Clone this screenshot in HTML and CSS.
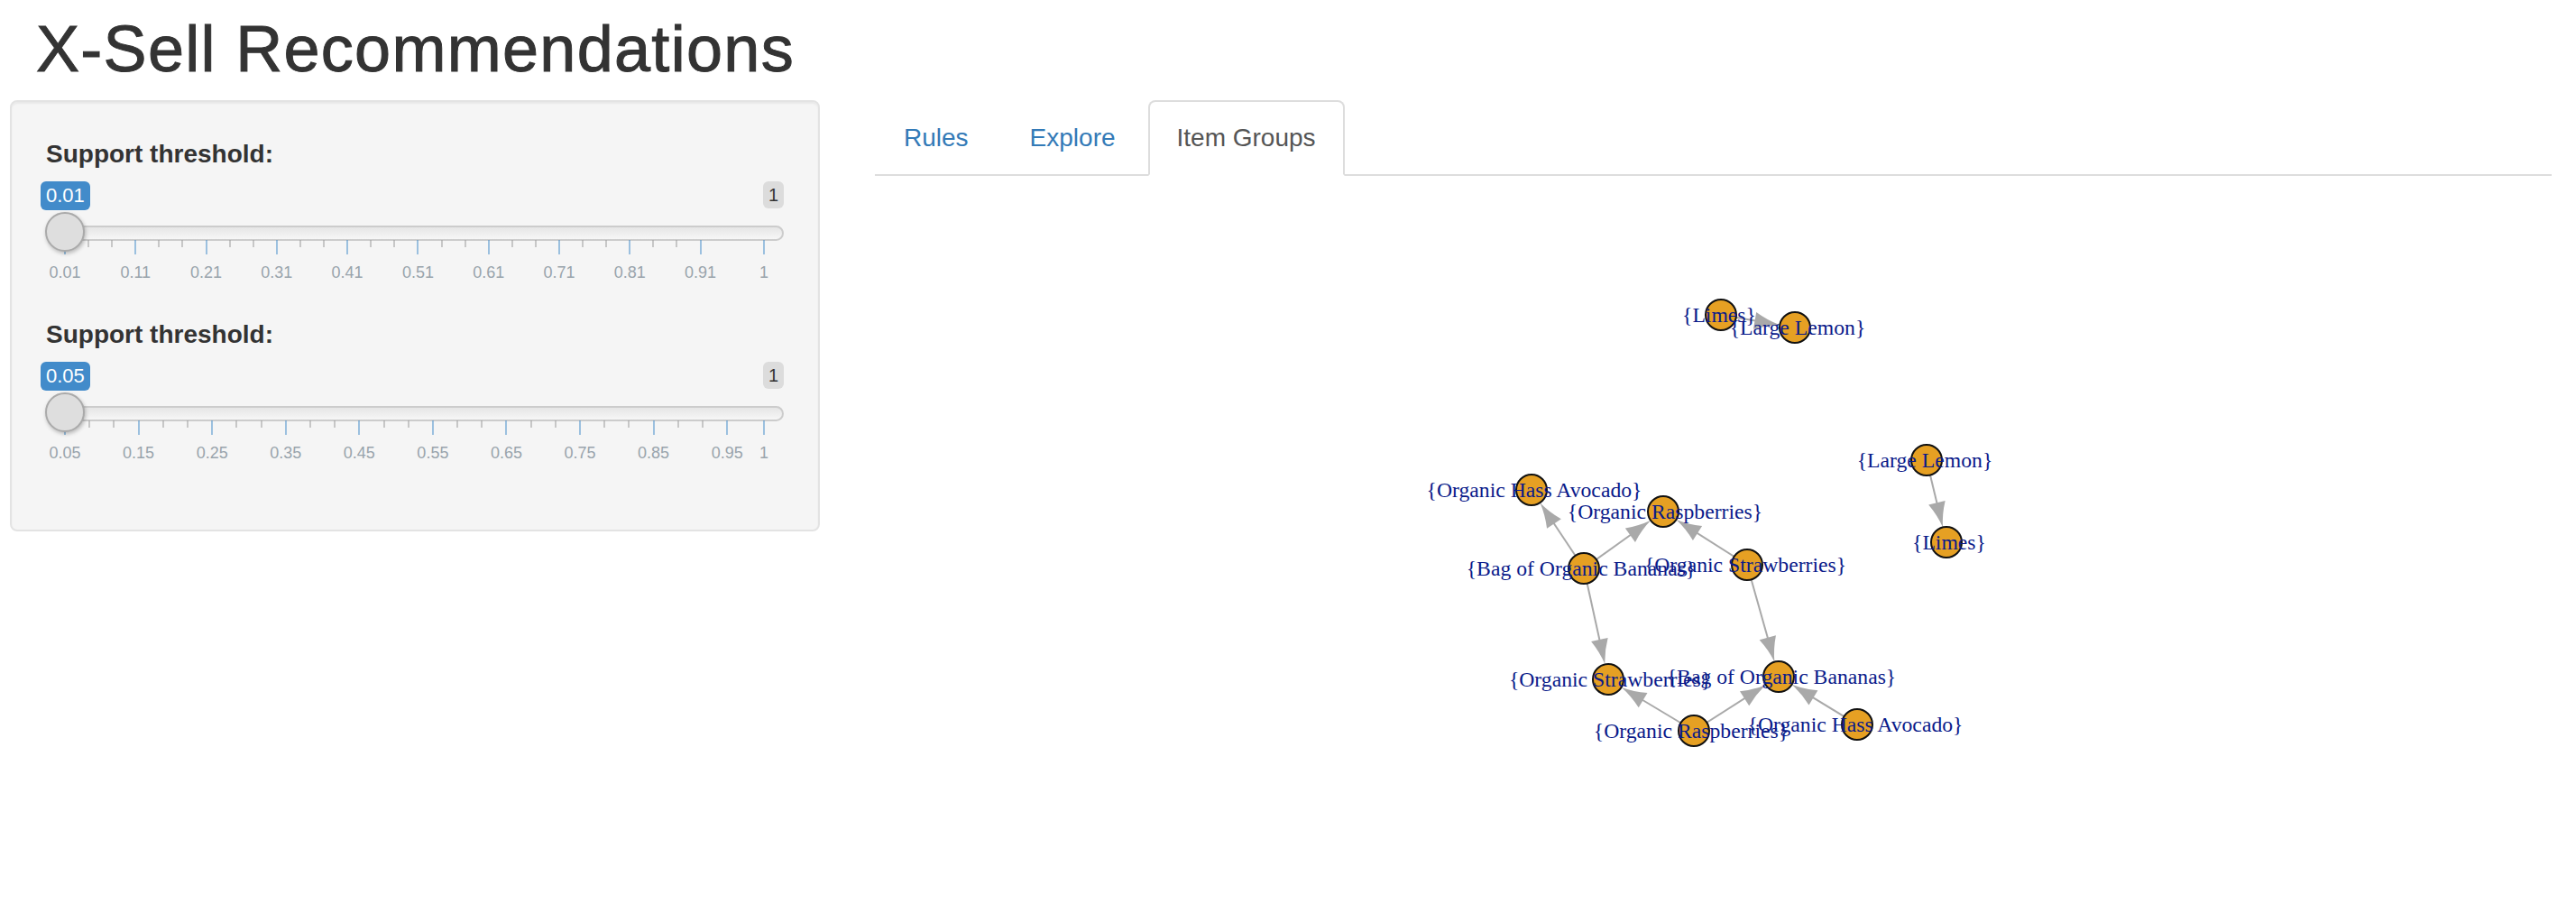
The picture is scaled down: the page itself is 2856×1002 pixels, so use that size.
FILE: index.html
```html
<!DOCTYPE html>
<html>
<head>
<meta charset="utf-8">
<title>X-Sell Recommendations</title>
<link rel="stylesheet" href="styles.css">
</head>
<body>
<div class="container">
  <h1 class="title">X-Sell Recommendations</h1>
  <div class="row">
    <aside class="sidebar">
      <div class="well">
        <div class="form-group">
          <label class="control-label">Support threshold:</label>
          <div class="irs">
            <span class="irs-line"></span>
            <span class="irs-max">1</span>
            <span class="irs-single">0.01</span>
            <div class="irs-grid">
              <span class="pol" style="left:0%"></span>
              <span class="pol small" style="left:3.367%"></span>
              <span class="pol small" style="left:6.734%"></span>
              <span class="pol" style="left:10.101%"></span>
              <span class="pol small" style="left:13.468%"></span>
              <span class="pol small" style="left:16.835%"></span>
              <span class="pol" style="left:20.202%"></span>
              <span class="pol small" style="left:23.569%"></span>
              <span class="pol small" style="left:26.936%"></span>
              <span class="pol" style="left:30.303%"></span>
              <span class="pol small" style="left:33.670%"></span>
              <span class="pol small" style="left:37.037%"></span>
              <span class="pol" style="left:40.404%"></span>
              <span class="pol small" style="left:43.771%"></span>
              <span class="pol small" style="left:47.138%"></span>
              <span class="pol" style="left:50.505%"></span>
              <span class="pol small" style="left:53.872%"></span>
              <span class="pol small" style="left:57.239%"></span>
              <span class="pol" style="left:60.606%"></span>
              <span class="pol small" style="left:63.973%"></span>
              <span class="pol small" style="left:67.340%"></span>
              <span class="pol" style="left:70.707%"></span>
              <span class="pol small" style="left:74.074%"></span>
              <span class="pol small" style="left:77.441%"></span>
              <span class="pol" style="left:80.808%"></span>
              <span class="pol small" style="left:84.175%"></span>
              <span class="pol small" style="left:87.542%"></span>
              <span class="pol" style="left:90.909%"></span>
              <span class="pol" style="left:100%"></span>
              <span class="grid-text" style="left:0%">0.01</span>
              <span class="grid-text" style="left:10.101%">0.11</span>
              <span class="grid-text" style="left:20.202%">0.21</span>
              <span class="grid-text" style="left:30.303%">0.31</span>
              <span class="grid-text" style="left:40.404%">0.41</span>
              <span class="grid-text" style="left:50.505%">0.51</span>
              <span class="grid-text" style="left:60.606%">0.61</span>
              <span class="grid-text" style="left:70.707%">0.71</span>
              <span class="grid-text" style="left:80.808%">0.81</span>
              <span class="grid-text" style="left:90.909%">0.91</span>
              <span class="grid-text" style="left:100%">1</span>
            </div>
            <span class="irs-slider"></span>
          </div>
        </div>
        <div class="form-group">
          <label class="control-label">Support threshold:</label>
          <div class="irs">
            <span class="irs-line"></span>
            <span class="irs-max">1</span>
            <span class="irs-single">0.05</span>
            <div class="irs-grid">
              <span class="pol" style="left:0%"></span>
              <span class="pol small" style="left:3.509%"></span>
              <span class="pol small" style="left:7.018%"></span>
              <span class="pol" style="left:10.526%"></span>
              <span class="pol small" style="left:14.035%"></span>
              <span class="pol small" style="left:17.544%"></span>
              <span class="pol" style="left:21.053%"></span>
              <span class="pol small" style="left:24.561%"></span>
              <span class="pol small" style="left:28.070%"></span>
              <span class="pol" style="left:31.579%"></span>
              <span class="pol small" style="left:35.088%"></span>
              <span class="pol small" style="left:38.597%"></span>
              <span class="pol" style="left:42.105%"></span>
              <span class="pol small" style="left:45.614%"></span>
              <span class="pol small" style="left:49.123%"></span>
              <span class="pol" style="left:52.632%"></span>
              <span class="pol small" style="left:56.140%"></span>
              <span class="pol small" style="left:59.649%"></span>
              <span class="pol" style="left:63.158%"></span>
              <span class="pol small" style="left:66.667%"></span>
              <span class="pol small" style="left:70.175%"></span>
              <span class="pol" style="left:73.684%"></span>
              <span class="pol small" style="left:77.193%"></span>
              <span class="pol small" style="left:80.702%"></span>
              <span class="pol" style="left:84.211%"></span>
              <span class="pol small" style="left:87.719%"></span>
              <span class="pol small" style="left:91.228%"></span>
              <span class="pol" style="left:94.737%"></span>
              <span class="pol" style="left:100%"></span>
              <span class="grid-text" style="left:0%">0.05</span>
              <span class="grid-text" style="left:10.526%">0.15</span>
              <span class="grid-text" style="left:21.053%">0.25</span>
              <span class="grid-text" style="left:31.579%">0.35</span>
              <span class="grid-text" style="left:42.105%">0.45</span>
              <span class="grid-text" style="left:52.632%">0.55</span>
              <span class="grid-text" style="left:63.158%">0.65</span>
              <span class="grid-text" style="left:73.684%">0.75</span>
              <span class="grid-text" style="left:84.211%">0.85</span>
              <span class="grid-text" style="left:94.737%">0.95</span>
              <span class="grid-text" style="left:100%">1</span>
            </div>
            <span class="irs-slider"></span>
          </div>
        </div>
      </div>
    </aside>
    <main class="main">
      <ul class="nav-tabs">
        <li><a href="#">Rules</a></li>
        <li><a href="#">Explore</a></li>
        <li class="active"><a href="#">Item Groups</a></li>
      </ul>
      <div class="tab-content">
        <svg class="graph" width="1859" height="780" viewBox="970 195 1859 780" xmlns="http://www.w3.org/2000/svg">
          <defs>
            <marker id="arrow" markerUnits="userSpaceOnUse" viewBox="-16 -11 32 22" markerWidth="32" markerHeight="22" refX="0" refY="0" orient="auto" overflow="visible">
              <path d="M14,0 Q0,-2.5 -14,-9.5 L-14,9.5 Q0,2.5 14,0 Z" fill="#a9a9a9"/>
            </marker>
          </defs>
          <g class="edges">
            <line x1="1908" y1="349" x2="1959.4" y2="357.8"/>
            <line x1="2136" y1="510" x2="2150.7" y2="570.9"/>
            <line x1="1756" y1="630" x2="1715.2" y2="568.8"/>
            <line x1="1756" y1="630" x2="1818.8" y2="585.0"/>
            <line x1="1937" y1="626" x2="1870.2" y2="583.6"/>
            <line x1="1756" y1="630" x2="1776.4" y2="722.7"/>
            <line x1="1937" y1="626" x2="1963.6" y2="720.2"/>
            <line x1="1878" y1="810" x2="1809.6" y2="769.0"/>
            <line x1="1878" y1="810" x2="1945.9" y2="766.7"/>
            <line x1="2059" y1="803" x2="1998.5" y2="766.1"/>
          </g>
          <g class="nodes">
            <circle cx="1908" cy="349" r="17"/>
            <circle cx="1990" cy="363" r="17"/>
            <circle cx="2136" cy="510" r="17"/>
            <circle cx="2158" cy="601" r="17"/>
            <circle cx="1698" cy="543" r="17"/>
            <circle cx="1844" cy="567" r="17"/>
            <circle cx="1756" cy="630" r="17"/>
            <circle cx="1937" cy="626" r="17"/>
            <circle cx="1783" cy="753" r="17"/>
            <circle cx="1972" cy="750" r="17"/>
            <circle cx="1878" cy="810" r="17"/>
            <circle cx="2059" cy="803" r="17"/>
          </g>
          <g class="labels">
            <text x="1906" y="357">{Limes}</text>
            <text x="1993" y="371">{Large Lemon}</text>
            <text x="2134" y="518">{Large Lemon}</text>
            <text x="2161" y="609">{Limes}</text>
            <text x="1701" y="551">{Organic Hass Avocado}</text>
            <text x="1846" y="575">{Organic Raspberries}</text>
            <text x="1753" y="638">{Bag of Organic Bananas}</text>
            <text x="1935" y="634">{Organic Strawberries}</text>
            <text x="1785" y="761">{Organic Strawberries}</text>
            <text x="1975" y="758">{Bag of Organic Bananas}</text>
            <text x="1875" y="818">{Organic Raspberries}</text>
            <text x="2057" y="811">{Organic Hass Avocado}</text>
          </g>
        </svg>
      </div>
    </main>
  </div>
</div>
</body>
</html>
```

FILE: styles.css
```css
html, body {
  margin: 0;
  padding: 0;
  background: #ffffff;
}

body {
  font-family: "Liberation Sans", Arial, Helvetica, sans-serif;
  font-size: 28px;
  line-height: 40px;
  color: #333333;
  overflow: hidden;
}

.container {
  padding: 0 27px 0 11px;
}

.title {
  margin: 0 0 17px 0;
  padding: 15px 0 0 29px;
  font-size: 72px;
  line-height: 79px;
  font-weight: normal;
  letter-spacing: 1.3px;
  color: #333333;
  -webkit-text-stroke: 1px #333333;
}

.row {
  display: flex;
  gap: 61px;
  align-items: flex-start;
}

.sidebar {
  flex: 0 0 898px;
}

.well {
  box-sizing: border-box;
  width: 898px;
  padding: 38px 38px 36px 38px;
  background: #f5f5f5;
  border: 2px solid #e3e3e3;
  border-radius: 8px;
  box-shadow: inset 0 2px 2px rgba(0, 0, 0, 0.05);
}

.form-group {
  margin-bottom: 30px;
}

.control-label {
  display: block;
  font-weight: bold;
  margin-bottom: 10px;
  line-height: 40px;
}

.irs {
  position: relative;
  height: 120px;
}

.irs-line {
  position: absolute;
  left: 0;
  right: 0;
  top: 49px;
  height: 17px;
  box-sizing: border-box;
  border: 2px solid #cccccc;
  border-radius: 16px;
  background: linear-gradient(to bottom, #dddddd -50%, #ffffff 150%);
}

.irs-single,
.irs-max {
  position: absolute;
  top: 0;
  border-radius: 6px;
  font-family: "Liberation Sans", Arial, sans-serif;
}

.irs-single {
  left: -6px;
  padding: 1px 6px;
  font-size: 22px;
  line-height: 30px;
  background: #428bca;
  color: #ffffff;
}

.irs-max {
  right: 0;
  padding: 2px 6px;
  font-size: 20px;
  line-height: 26px;
  background: #dcdcdc;
  color: #333333;
}

.irs-slider {
  position: absolute;
  left: -1px;
  top: 34px;
  width: 44px;
  height: 44px;
  box-sizing: border-box;
  border: 2px solid #aaaaaa;
  border-radius: 50%;
  background: #dedede;
  box-shadow: 1px 2px 4px rgba(0, 0, 0, 0.25);
}

.irs-grid {
  position: absolute;
  left: 21px;
  right: 22px;
  top: 65px;
  height: 55px;
}

.pol {
  position: absolute;
  top: 0;
  width: 2px;
  height: 16px;
  margin-left: -1px;
  background: #428bca;
  opacity: 0.5;
}

.pol.small {
  height: 8px;
  background: #999999;
}

.grid-text {
  position: absolute;
  bottom: 10px;
  font-size: 18px;
  line-height: 18px;
  color: #99a4ac;
  white-space: nowrap;
  transform: translateX(-50%);
}

.main {
  flex: 1 1 auto;
  min-width: 0;
}

.nav-tabs {
  display: flex;
  margin: 0;
  padding: 0;
  list-style: none;
  border-bottom: 2px solid #dddddd;
}

.nav-tabs li {
  margin-bottom: -2px;
}

.nav-tabs a {
  display: block;
  margin-right: 4px;
  padding: 20px 30px;
  line-height: 40px;
  font-size: 28px;
  color: #337ab7;
  text-decoration: none;
  border: 2px solid transparent;
  border-radius: 8px 8px 0 0;
}

.nav-tabs .active a {
  color: #555555;
  background: #ffffff;
  border-color: #dddddd #dddddd transparent;
}

.graph {
  display: block;
}

.edges line {
  stroke: #a9a9a9;
  stroke-width: 2;
  marker-end: url(#arrow);
}

.nodes circle {
  fill: #e6a023;
  stroke: #111111;
  stroke-width: 2;
}

.labels text {
  font-family: "Liberation Serif", "Times New Roman", serif;
  font-size: 23.7px;
  fill: #0a1a8a;
  text-anchor: middle;
}
```
